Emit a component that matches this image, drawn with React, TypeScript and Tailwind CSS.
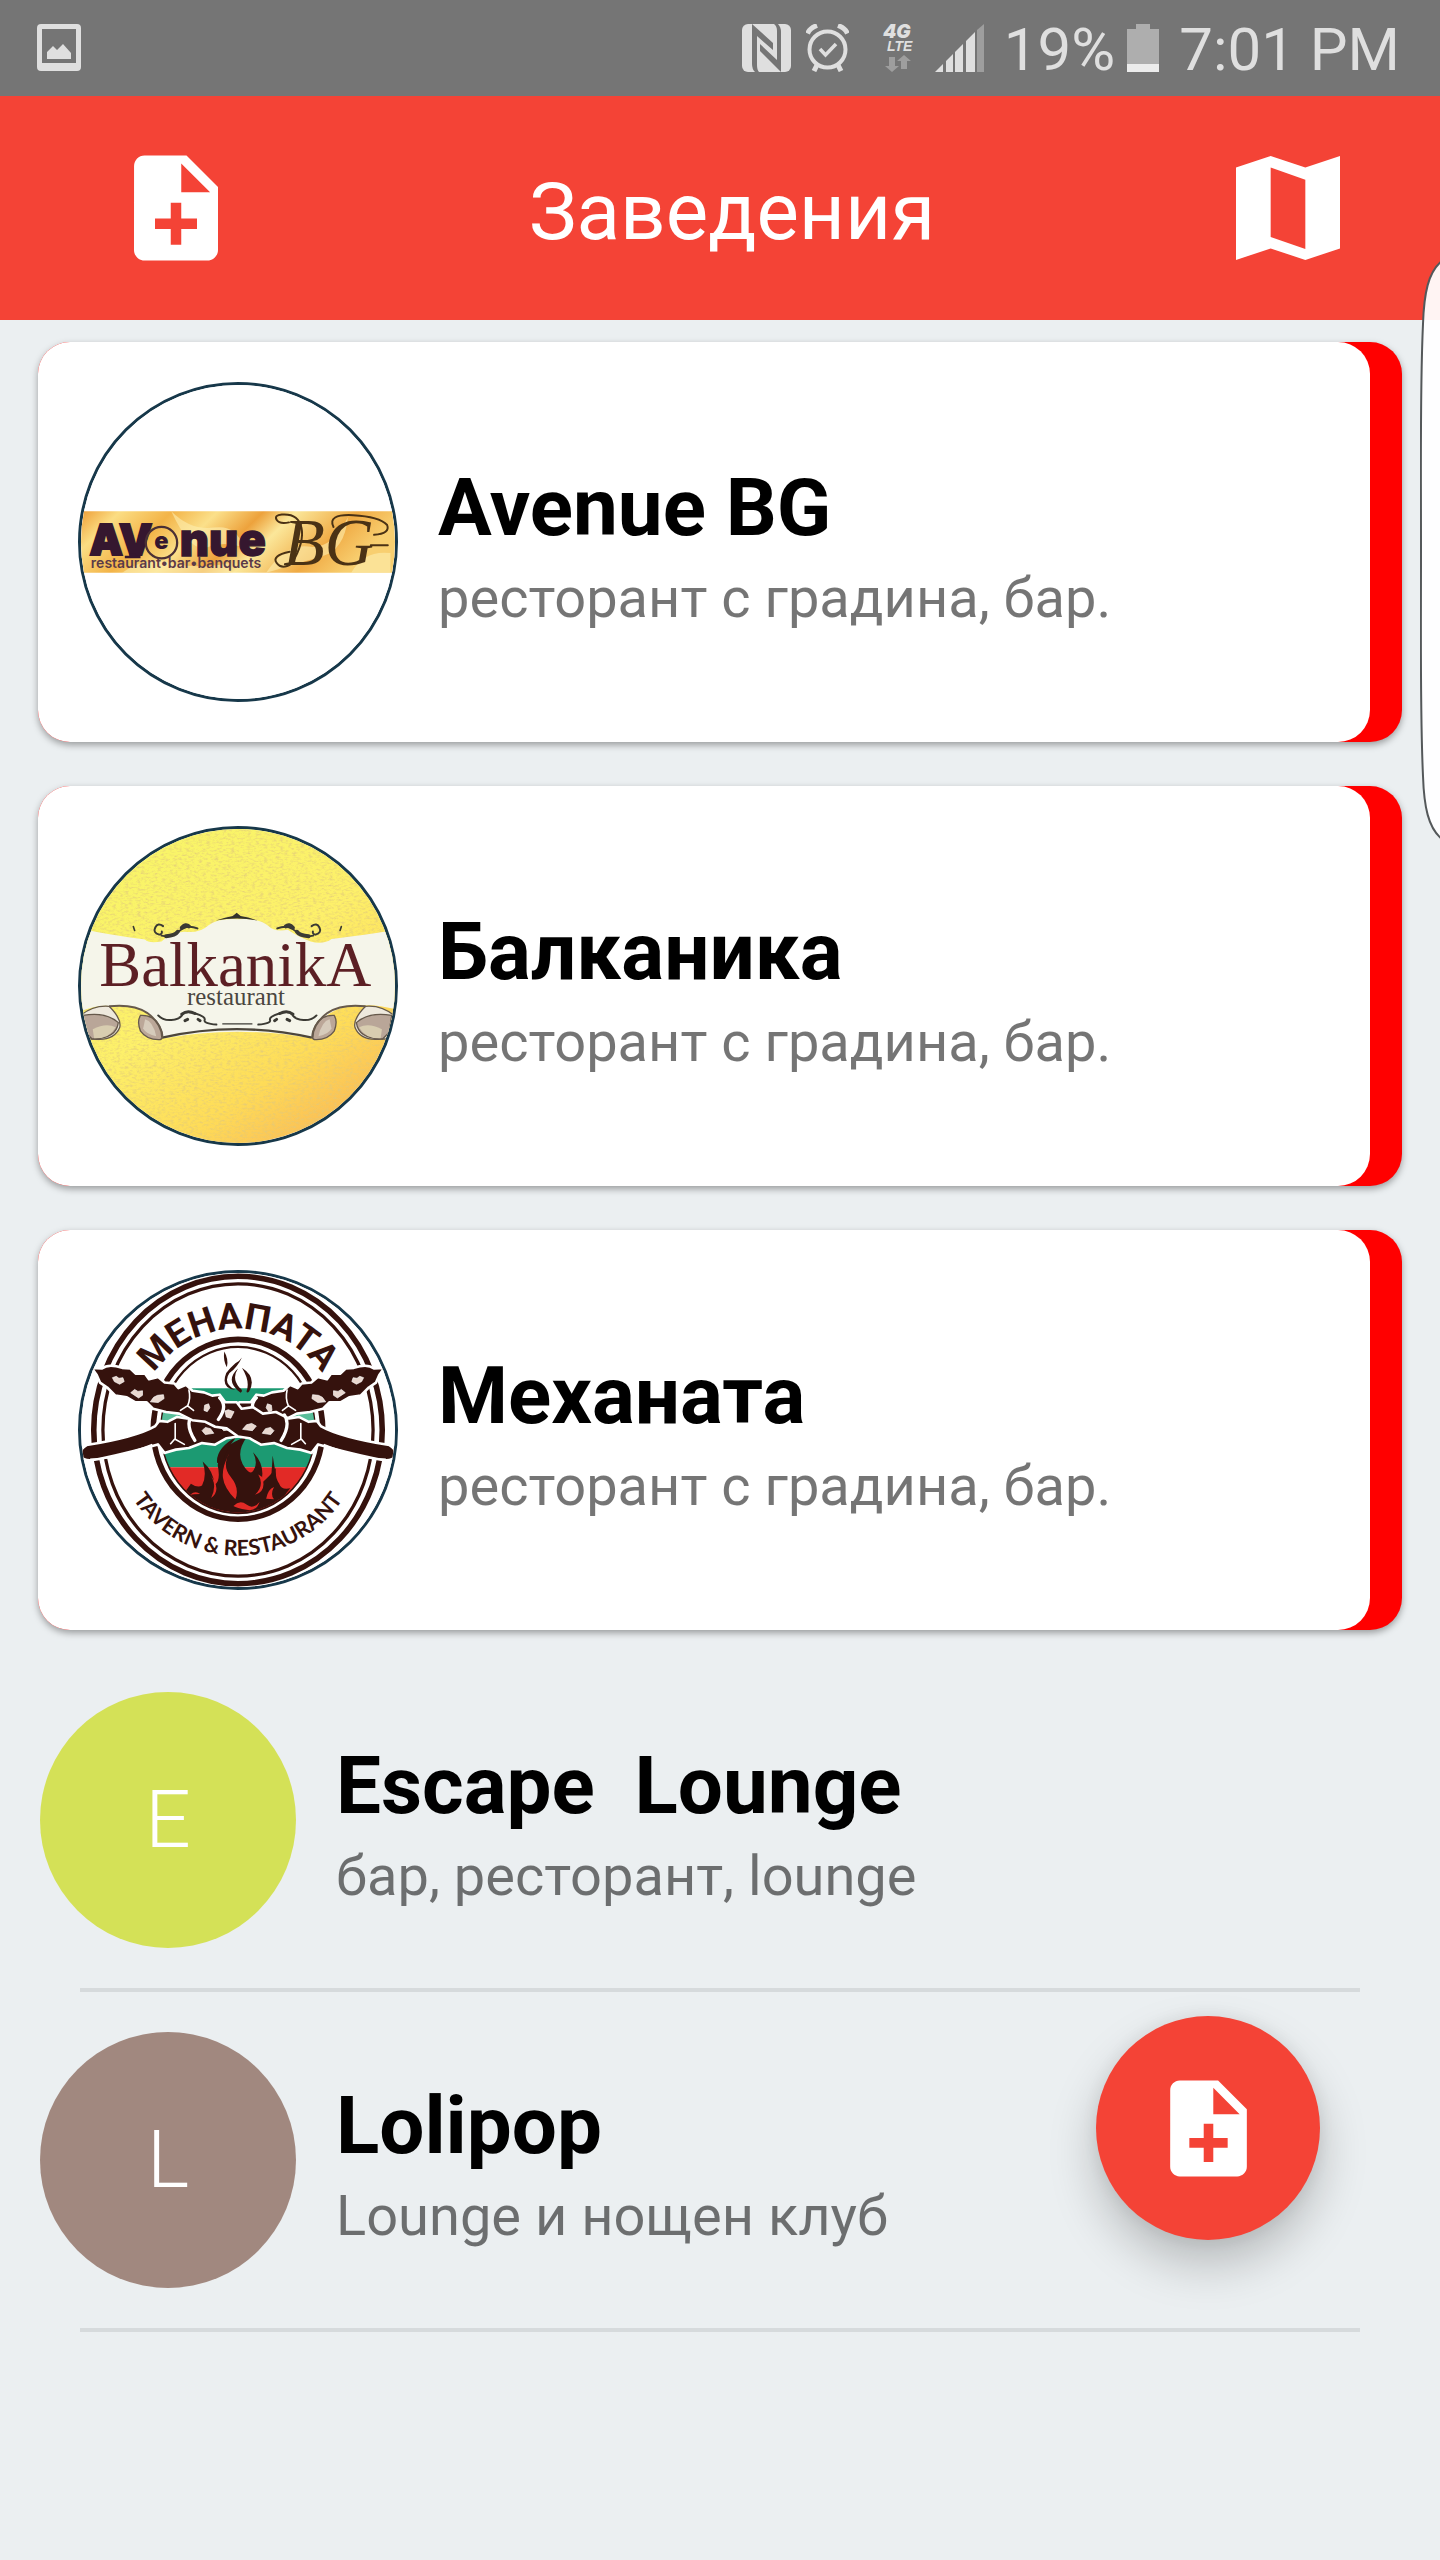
import type { ReactNode } from "react";

const NOTE_ADD =
  "M14 2H6c-1.1 0-1.99.9-1.99 2L4 20c0 1.1.89 2 1.99 2H18c1.1 0 2-.9 2-2V8l-6-6zm2 14h-3v3h-2v-3H8v-2h3v-3h2v3h3v2zm-3-7V3.500L18.500 9H13z";

function NoteAddIcon({ className }: { className: string }) {
  return (
    <svg viewBox="0 0 24 24" className={className} fill="currentColor" aria-hidden="true">
      <path d={NOTE_ADD} />
    </svg>
  );
}

function MapIcon({ className }: { className: string }) {
  return (
    <svg viewBox="3 3 18 18" className={className} fill="currentColor" aria-hidden="true">
      <path
        fillRule="evenodd"
        d="M3 5 9 3l6 2 6-2v16l-6 2-6-2-6 2zM9 5v12l6 2.100V7.100z"
      />
    </svg>
  );
}

function StatusBar() {
  return (
    <div className="flex h-24 items-center bg-[#757575] pl-[37px] pr-10 text-[60px] text-[#dfdfdf]">
      <svg viewBox="0 0 44 48" className="h-12 w-11" fill="currentColor" aria-hidden="true">
        <path
          fillRule="evenodd"
          d="M4 0h36a4 4 0 0 1 4 4v39a4 4 0 0 1-4 4H4a4 4 0 0 1-4-4V4a4 4 0 0 1 4-4zM5 5v34h34V5z"
        />
        <path d="M10 35v-7l6-6 4 4 6-6 8 9v6z" />
      </svg>
      <div className="ml-auto flex items-center">
        <svg viewBox="0 0 49 48" className="h-12 w-[49px]" aria-hidden="true">
          <rect width="49" height="48" rx="6" fill="#dfdfdf" />
          <path
            d="M10 0l21 19v7L15 12v29q0 5 2 7h-4q-3-3-3-8zM39 48L18 27v-7l17 16V7q0-5-3-7h4q3 3 3 8z"
            fill="#757575"
          />
        </svg>
        <svg viewBox="0 0 43 48" className="ml-[15px] h-12 w-[43px]" fill="none" stroke="#dfdfdf" strokeWidth="4" aria-hidden="true">
          <circle cx="21.500" cy="25.500" r="18" />
          <path d="m14 25 5.500 6L30 20" strokeWidth="3.500" />
          <path d="M1.500 9.500Q4 4 11 1.500M41.500 9.500Q39 4 32 1.500M11 41l-3 6M32 41l3 6" strokeWidth="5" />
        </svg>
        <svg viewBox="0 0 30 48" className="ml-[34px] h-12 w-[30px] overflow-visible" fill="#dfdfdf" aria-hidden="true">
          <text x="0" y="14" fontFamily="Inter" fontSize="19" fontWeight="900" fontStyle="italic">4G</text>
          <text x="4" y="27" fontFamily="Liberation Sans" fontSize="14" fontWeight="700" fontStyle="italic">LTE</text>
          <path d="M6 33h6v9h4l-7 6-7-6h4zM18 45V37h-4l7-6 7 6h-4v8z" fill="#9e9e9e" />
        </svg>
        <svg viewBox="0 0 49 48" className="ml-[22px] h-12 w-[49px]" fill="#dfdfdf" aria-hidden="true">
          <path d="M0 48l8-8v8zM11 37l7-7v18h-7zM20 28l8-8v28h-8zM31 17l9-9v40h-9z" />
          <path d="M42 6l7-6v48h-7z" fill="#9e9e9e" />
        </svg>
        <span className="ml-5 pt-1 leading-[70px]">19%</span>
        <svg viewBox="0 0 32 48" className="ml-3 h-12 w-8" aria-hidden="true">
          <path d="M9 0h14v5h9v35H0V5h9z" fill="#aeaeae" />
          <path d="M0 40h32v8H0z" fill="#ececec" />
        </svg>
        <span className="ml-5 pt-1 leading-[70px]">7:01 PM</span>
      </div>
    </div>
  );
}

function AvenueLogo() {
  return (
    <svg viewBox="54 66 960 960" className="size-full" role="img" aria-label="Avenue BG">
      <defs>
        <linearGradient id="avenue-band" x1="0" x2="1" y1="0" y2="0.200">
          <stop offset="0" stopColor="#ee9f38" />
          <stop offset="0.120" stopColor="#fbdd83" />
          <stop offset="0.280" stopColor="#f3b448" />
          <stop offset="0.420" stopColor="#fbe08a" />
          <stop offset="0.560" stopColor="#eda23c" />
          <stop offset="0.660" stopColor="#fbe79a" />
          <stop offset="0.850" stopColor="#f0ab45" />
          <stop offset="1" stopColor="#f8cf70" />
        </linearGradient>
      </defs>
      <rect x="54" y="66" width="960" height="960" fill="#fff" />
      <rect x="54" y="452" width="960" height="188" fill="url(#avenue-band)" />
      <g fill="#fdeeb0" opacity="0.600">
        <path d="M330 452q60 60 130 50t90 60q-60-20-110 0t-110-110zM620 640q60-90 130-80t120-90q-10 100-80 120t-170 50z" />
        <path d="M180 640q70-50 150-30t180 0v30zM880 640q40-70 120-60v60z" />
      </g>
      <text x="80" y="586" fontFamily="Inter" fontSize="128" fontWeight="900" fill="#35172f" stroke="#35172f" strokeWidth="6">AV</text>
      <path d="M202 582h20v6h14v8h-48v-8h14z" fill="#35172f" />
      <circle cx="300" cy="548" r="48" fill="none" stroke="#4b3035" strokeWidth="7" />
      <text x="278" y="568" fontFamily="Inter" fontSize="72" fontWeight="900" fill="#35172f">e</text>
      <text x="356" y="588" fontFamily="Inter" fontSize="138" fontWeight="900" fill="#35172f" stroke="#35172f" strokeWidth="4">nue</text>
      <text x="84" y="626" fontFamily="Inter" fontSize="43" fontWeight="600" fill="#5b3a48">restaurant•bar•banquets</text>
      <text x="672" y="616" fontFamily="Liberation Serif" fontSize="208" fontStyle="italic" fill="#4a3215">BG</text>
      <path
        d="M690 486q-30 6-38-8t16-16q50-4 60 40t-30 110q-30 20-46-2t40-34M826 500q-20-40 60-36t104 30q10 26-40 30M940 556h52"
        fill="none"
        stroke="#4a3215"
        strokeWidth="6"
        strokeLinecap="round"
      />
    </svg>
  );
}

function BalkanikaOrnament() {
  return (
    <g fill="none" stroke="#3b3a34" strokeLinecap="round">
      <path d="M305 345q-16-12-24 4t12 22q10-2 8-10M300 374q30 6 46-8t30-18 34 4" strokeWidth="6" />
      <path d="M314 376q28-2 36-14M362 350q12-14 22-4" strokeWidth="12" />
      <path d="M214 346l4 12" strokeWidth="5" />
      <path d="M290 618q14 16 40 14t34-16 40-4 28 20 36 14" strokeWidth="6" />
      <path d="M362 614q18-14 40-2M372 634l8-4M412 630l6 4" strokeWidth="9" />
    </g>
  );
}

function BalkanikaScroll() {
  return (
    <g stroke="#66594b" strokeWidth="4">
      <path d="M50 620q40-34 90-30 40 40 32 66-18 42-80 34H50z" fill="#eee9dd" />
      <path d="M60 618q70-12 108 22-6 50-80 50l-20-20z" fill="#b9a698" />
      <path d="M90 660q40-20 70-6-20 36-66 34z" fill="#d8cdb0" stroke="none" />
      <path d="M236 618q40-2 58 32 18 36 2 42-40 2-60-26-12-30 0-48z" fill="#bba798" />
      <path d="M250 630q24 6 34 52-30-6-40-24z" fill="#d6cbbb" stroke="none" />
      <path d="M140 590q74-8 116 20 46 34 46 76" fill="none" strokeWidth="6" />
    </g>
  );
}

function BalkanikaLogo() {
  return (
    <svg viewBox="54 48 960 960" className="size-full" role="img" aria-label="Balkanika restaurant">
      <defs>
        <linearGradient id="balkanika-paper" x1="0.200" x2="0.900" y1="0" y2="1">
          <stop offset="0" stopColor="#f8f568" />
          <stop offset="0.450" stopColor="#fdf06a" />
          <stop offset="0.720" stopColor="#fedc58" />
          <stop offset="0.880" stopColor="#fbc356" />
          <stop offset="1" stopColor="#f8c670" />
        </linearGradient>
        <filter id="balkanika-grain" x="0" y="0" width="1" height="1">
          <feTurbulence type="fractalNoise" baseFrequency="0.080 0.160" numOctaves="3" seed="4" />
          <feColorMatrix values="0 0 0 0 0.750 0 0 0 0 0.580 0 0 0 0 0.200 2.400 0 0 0 -1.100" />
        </filter>
      </defs>
      <rect x="54" y="48" width="960" height="960" fill="url(#balkanika-paper)" />
      <rect x="54" y="48" width="960" height="960" filter="url(#balkanika-grain)" opacity="0.750" />
      <path
        d="M50 352q80 18 200 34 10 12 50 6 30-28 70-30 46 6 74-20 30-22 90-18 64-4 92 20 20 20 60 12 30 20 70 36 40 10 64-8 80-8 200-28v244q-80-20-110-10-90-6-130 60l-20 38q-230-40-452 0l-20-38q-36-72-140-60-40-6-98 16z"
        fill="#f5f5ea"
      />
      <path d="M302 686q228-52 458 0" fill="none" stroke="#4c463c" strokeWidth="7" />
      <path d="M466 328q30-10 52-14l12-10 12 10q26 4 52 14-62-12-128 0z" fill="#33312c" />
      <BalkanikaOrnament />
      <g transform="translate(1064 0) scale(-1 1)">
        <BalkanikaOrnament />
      </g>
      <path d="M486 644h92" stroke="#3b3a34" strokeWidth="4" />
      <BalkanikaScroll />
      <g transform="translate(1064 0) scale(-1 1)">
        <BalkanikaScroll />
      </g>
      <text x="526" y="528" textAnchor="middle" fontFamily="Liberation Serif" fontSize="192" fill="#5c1f24">BalkanikA</text>
      <text x="528" y="586" textAnchor="middle" fontFamily="Liberation Serif" fontSize="76" fill="#4a4640">restaurant</text>
    </svg>
  );
}

function Skewer() {
  return (
    <g>
      <path
        d="M86 350l32 2q20-16 62-2l25 2 17 16 28 0 12 17 28-7 20 17 30 3 12 14 23-10 20 18 35 5 25 10 23-3 17 23 35 0 15 20 35-5 30 20 40-5 40 20 30-5 30 15 25-3 12 16q60 34 210 58 24 14 18 34-10 20-60 8-100-22-176-44l-20 26-35-10-40-5-40-15-40 5-35-20-35-5-35-25-35-5-30-15-40-5-40-20-40-5-40-10-20-20-35 0-25-15-35-5-25-25-22-15-10-23z"
        fill="#35120d"
        stroke="#fff"
        strokeWidth="8"
        strokeLinejoin="round"
      />
      <path d="M796 584q110 44 190 46" fill="none" stroke="#fff" strokeWidth="5" />
      <g fill="#e9d8d0" stroke="#fff" strokeWidth="2" strokeLinejoin="round">
        <path d="M150 380l12-4 8 6 12-2 4 12-14 8-16-8z" />
        <path d="M206 426l12-10 10 6 14-2 0 14-12 8z" />
        <path d="M266 454l10-14 12-6 18-2 2 12-18 12z" />
        <path d="M432 464l12-4 4 12-8 12-10-4zM494 482l10-4 18 6-10 20-14-4z" />
        <path d="M548 538l12-14 16-4 14 8-12 14z" />
        <path d="M608 550l10-14 16-4 10 10-10 12z" />
      </g>
      <g fill="none" stroke="#fff" strokeLinecap="round">
        <path d="M384 418q6 26-4 48l-22 14M380 466l18 14" strokeWidth="5" />
        <path d="M478 442q26 26-4 66M676 494q20 30-10 78" strokeWidth="10" />
        <path d="M726 520v48l-28 16M728 568l12 14" strokeWidth="5" />
      </g>
    </g>
  );
}

function MehanataLogo() {
  return (
    <svg viewBox="54 60 960 960" className="size-full" role="img" aria-label="Mehanata tavern and restaurant">
      <defs>
        <path id="mehanata-top" d="M225 540a309 309 0 0 1 618 0" />
        <path id="mehanata-bottom" d="M150 540a384 384 0 0 0 768 0" />
        <clipPath id="mehanata-flag">
          <ellipse cx="534" cy="540" rx="234" ry="252" />
        </clipPath>
      </defs>
      <rect x="54" y="60" width="960" height="960" fill="#fff" />
      <g fill="none" stroke="#35120d">
        <ellipse cx="534" cy="540" rx="441" ry="470" strokeWidth="17" />
        <ellipse cx="534" cy="540" rx="413" ry="447" strokeWidth="10" />
        <ellipse cx="534" cy="538" rx="259" ry="275" strokeWidth="17" />
        <ellipse cx="534" cy="540" rx="235" ry="254" strokeWidth="7" />
      </g>
      <g clipPath="url(#mehanata-flag)">
        <path d="M280 412h510v242H280z" fill="#1c9a72" />
        <path d="M280 486h100v60H280zM690 486h100v60H690z" fill="#58bd99" />
        <path d="M280 654h510v150H280z" fill="#e22a26" />
        <path
          d="M350 800q10-60 40-96 20 14 34 6 16-30 2-74 34 30 36 72 20-10 10-60 4-60 90-88-34 46-14 84 20 34 30 24 20-24 2-60 40 40 24 96 30-26 46-48-4 30 10 48 6 20 34 14-30 30-34 90z"
          fill="#35120d"
        />
        <path d="M470 640q-4-44 60-80-40 50-44 86zM640 618l10 60h-14z" fill="#35120d" />
        <g fill="#e22a26">
          <path d="M508 610q-24 40 4 74t14 68q-34-34-38-66t20-76zM448 676q24 30 4 72 34-26-4-72zM596 676q20 34-10 62 36-10 22-54z" />
          <path d="M388 738q16-14 30-2-20 0-30 2zM520 772q20-20 40-4t40-8q-10 30-40 24t-40-12zM620 750q6-30 24-36-12 24 0 38z" />
        </g>
      </g>
      <path d="M492 300q14 24 8 48-12-20-8-48z" fill="#35120d" />
      <path
        d="M546 318q-14 30-38 48-22 30 18 52-46-6-28-52 14-18 28-30 14-8 20-18zM546 350q46 30 22 72-6 6-8 0 12-30-14-72zM534 352q-20 30 4 58 14 10 4 16-50-36-8-74z"
        fill="#35120d"
      />
      <g transform="translate(1068 0) scale(-1 1)">
        <Skewer />
      </g>
      <Skewer />
      <text fontFamily="Roboto" fontSize="112" fontWeight="700" fill="#35120d" textAnchor="middle">
        <textPath href="#mehanata-top" startOffset="50%">MEHAПATA</textPath>
      </text>
      <text fontFamily="Lato" fontSize="66" fontWeight="700" fill="#35120d" textAnchor="middle">
        <textPath href="#mehanata-bottom" startOffset="50%">TAVERN &amp; RESTAURANT</textPath>
      </text>
    </svg>
  );
}

function VenueText({ name, kind }: { name: string; kind: string }) {
  return (
    <div className="min-w-0 flex-1 pl-10 pt-2">
      <h2 className="whitespace-pre text-[80px] font-bold leading-[94px] text-black">{name}</h2>
      <p className="mt-2.5 text-[56px] leading-[66px] text-black/54">{kind}</p>
    </div>
  );
}

const FEATURED: { name: string; kind: string; logo: ReactNode }[] = [
  { name: "Avenue BG", kind: "ресторант с градина, бар.", logo: <AvenueLogo /> },
  { name: "Балканика", kind: "ресторант с градина, бар.", logo: <BalkanikaLogo /> },
  { name: "Механата", kind: "ресторант с градина, бар.", logo: <MehanataLogo /> },
];

const VENUES = [
  { name: "Escape  Lounge", kind: "бар, ресторант, lounge", letter: "E", color: "bg-[#d4e157]" },
  { name: "Lolipop", kind: "Lounge и нощен клуб", letter: "L", color: "bg-[#a1887f]" },
];

export default function App() {
  return (
    <div className="min-h-screen bg-[#ebeff1] font-['Roboto',sans-serif]">
      <StatusBar />
      <header className="flex h-56 items-center justify-between bg-[#f44336] pl-28 pr-[88px] text-white">
        <button type="button" aria-label="Добави" className="flex size-32 items-center justify-center">
          <NoteAddIcon className="size-[126px]" />
        </button>
        <h1 className="pt-2 text-[80px] leading-[94px]">Заведения</h1>
        <button type="button" aria-label="Карта" className="flex size-32 items-center justify-center">
          <MapIcon className="size-[104px]" />
        </button>
      </header>

      <main>
        <ul className="flex flex-col gap-11 px-[38px] py-[22px]">
          {FEATURED.map((venue) => (
            <li key={venue.name} className="rounded-[32px] bg-[#ff0000] pr-8 shadow-[0_3px_7px_rgba(0,0,0,0.35)]">
              <a href="#" className="flex items-center rounded-[32px] bg-white p-10">
                <div className="size-80 shrink-0 overflow-hidden rounded-full border-[3px] border-[#17384a]">{venue.logo}</div>
                <VenueText name={venue.name} kind={venue.kind} />
              </a>
            </li>
          ))}
        </ul>
        <ul>
          {VENUES.map((venue) => (
            <li key={venue.name}>
              <a href="#" className="flex items-center px-10 py-10">
                <div
                  className={`flex size-64 shrink-0 items-center justify-center rounded-full text-[80px] font-light text-white ${venue.color}`}
                >
                  {venue.letter}
                </div>
                <VenueText name={venue.name} kind={venue.kind} />
              </a>
              <div className="mx-20 h-1 bg-[#d6dadc]" />
            </li>
          ))}
        </ul>
      </main>

      <button
        type="button"
        aria-label="Ново заведение"
        className="fixed bottom-80 right-[120px] flex size-56 items-center justify-center rounded-full bg-[#f44336] text-white shadow-[0_24px_48px_rgba(0,0,0,0.22),0_0_20px_rgba(0,0,0,0.08)]"
      >
        <NoteAddIcon className="size-[115px]" />
      </button>

      <svg viewBox="0 0 20 584" className="absolute right-0 top-[258px] h-[584px] w-5" aria-hidden="true">
        <path
          d="M22 3C8 14 4 36 3 66 0 130 1 200 1 292s-1 162 2 226c1 30 5 52 19 63"
          fill="#fff"
          fillOpacity="0.940"
          stroke="#54585a"
          strokeWidth="2"
        />
      </svg>
    </div>
  );
}
